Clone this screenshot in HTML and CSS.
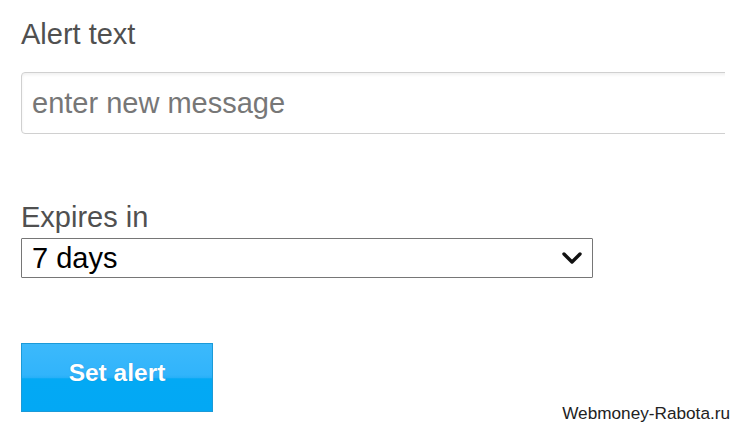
FILE: index.html
```html
<!DOCTYPE html>
<html>
<head>
<meta charset="utf-8">
<link rel="stylesheet" href="styles.css">
</head>
<body>
<form class="form">
  <label class="label label-alert" for="msg">Alert text</label>
  <div class="input-clip">
    <input class="text-input" id="msg" type="text" placeholder="enter new message">
  </div>
  <label class="label label-expires" for="exp">Expires in</label>
  <div class="select-wrap">
    <select class="select" id="exp">
      <option>7 days</option>
    </select>
    <svg class="chevron" width="20" height="12" viewBox="0 0 20 12"><path d="M2 2 L10 10 L18 2" fill="none" stroke="#111" stroke-width="3.4" stroke-linecap="round" stroke-linejoin="round"/></svg>
  </div>
  <button class="btn" type="button">Set alert</button>
</form>
<div class="watermark">Webmoney-Rabota.ru</div>
</body>
</html>
```
FILE: styles.css
```css
html, body {
  margin: 0;
  padding: 0;
  background: #fff;
  width: 736px;
  height: 431px;
  overflow: hidden;
}
body {
  position: relative;
  font-family: "Liberation Sans", Arial, sans-serif;
}
.form {
  display: flex;
  flex-direction: column;
  align-items: flex-start;
  padding: 18px 0 0 21px;
}
.label {
  font-size: 29px;
  line-height: 33px;
  color: #505050;
}
.input-clip {
  margin-top: 21px;
  width: 704px;
  overflow: hidden;
}
.text-input {
  display: block;
  box-sizing: border-box;
  width: 760px;
  height: 62px;
  margin: 0;
  border: 1px solid #d0d0d0;
  border-radius: 4px;
  box-shadow: inset 0 2px 3px rgba(0,0,0,0.06);
  padding: 0 10px;
  font-family: "Liberation Sans", Arial, sans-serif;
  font-size: 29px;
  color: #333;
  outline: none;
}
.text-input::placeholder {
  color: #777;
}
.label-expires {
  margin-top: 67px;
}
.select-wrap {
  position: relative;
  margin-top: 4px;
}
.select {
  appearance: none;
  -webkit-appearance: none;
  box-sizing: border-box;
  width: 572px;
  height: 40px;
  border: 1px solid #767676;
  border-radius: 1px;
  background: #fff;
  padding: 0 0 0 10px;
  font-family: "Liberation Sans", Arial, sans-serif;
  font-size: 29px;
  color: #000;
  margin: 0;
  display: block;
}
.chevron {
  position: absolute;
  left: 541px;
  top: 14px;
  pointer-events: none;
}
.btn {
  margin-top: 65px;
  box-sizing: border-box;
  width: 192px;
  height: 69px;
  border: 1px solid #1b9ad8;
  border-radius: 0;
  background: linear-gradient(to bottom, #3cb9fb 0, #31b4fb 46%, #28b0f8 50%, #03a9f4 52%, #03a8f4 100%);
  color: #fff;
  font-family: "Liberation Sans", Arial, sans-serif;
  font-weight: bold;
  font-size: 24.5px;
  text-shadow: 0 0 1px rgba(0,60,120,0.35);
  padding: 0 0 10px 0;
  cursor: pointer;
}
.watermark {
  position: absolute;
  right: 6px;
  top: 403px;
  font-size: 17.2px;
  line-height: 20px;
  color: #222;
}
```
